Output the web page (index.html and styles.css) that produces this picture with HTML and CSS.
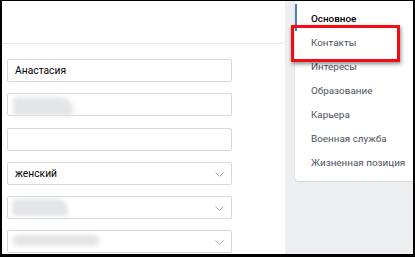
FILE: index.html
```html
<!DOCTYPE html>
<html>
<head>
<meta charset="utf-8">
<link rel="stylesheet" href="styles.css">
</head>
<body>
<div class="frame">
  <div class="main">
    <div class="head"></div>
    <div class="form">
      <div class="field"><span class="val">Анастасия</span></div>
      <div class="field"><span class="blob blob-a"></span></div>
      <div class="field"></div>
      <div class="field select"><span class="val">женский</span><svg class="chev" width="9" height="5" viewBox="0 0 9 5"><path d="M0.5 0.5 L4.5 4.5 L8.5 0.5" fill="none" stroke="#aab4c0" stroke-width="1"/></svg></div>
      <div class="field select"><span class="blob blob-b"></span><svg class="chev" width="9" height="5" viewBox="0 0 9 5"><path d="M0.5 0.5 L4.5 4.5 L8.5 0.5" fill="none" stroke="#aab4c0" stroke-width="1"/></svg></div>
      <div class="field select"><span class="blob blob-c"></span><svg class="chev" width="9" height="5" viewBox="0 0 9 5"><path d="M0.5 0.5 L4.5 4.5 L8.5 0.5" fill="none" stroke="#aab4c0" stroke-width="1"/></svg></div>
    </div>
  </div>
  <div class="side">
    <div class="menu">
      <div class="item active">Основное</div>
      <div class="item">Контакты</div>
      <div class="item">Интересы</div>
      <div class="item">Образование</div>
      <div class="item">Карьера</div>
      <div class="item">Военная служба</div>
      <div class="item">Жизненная позиция</div>
    </div>
  </div>
  <div class="mark"></div>
</div>
</body>
</html>
```
FILE: styles.css
```css
html, body {
  margin: 0;
  padding: 0;
  background: #000;
}
body {
  width: 415px;
  height: 257px;
  overflow: hidden;
  font-family: Roboto, "Open Sans", Arial, sans-serif;
}
.frame {
  position: relative;
  margin: 1px 2px 0 2px;
  width: 411px;
  height: 253px;
  display: flex;
  background: #edeef0;
  overflow: hidden;
}
.main {
  width: 283px;
  flex-shrink: 0;
  background: #fff;
  display: flex;
  flex-direction: column;
}
.head {
  height: 42px;
  border-bottom: 1px solid #e7e8ec;
}
.form {
  padding: 15px 0 0 5px;
  display: flex;
  flex-direction: column;
  gap: 11.3px;
}
.field {
  position: relative;
  width: 216px;
  height: 21px;
  border: 1px solid #d3d9de;
  border-radius: 2px;
  background: #fff;
  display: flex;
  align-items: center;
  padding-left: 7px;
  box-sizing: content-box;
}
.val {
  font-size: 10.3px;
  color: #000;
}
.chev {
  position: absolute;
  right: 7px;
  top: 9px;
}
.blob {
  position: absolute;
  background: #e4e5e7;
  filter: blur(2px);
}
.blob-a {
  left: 5px;
  top: 3px;
  width: 60px;
  height: 19px;
  border-radius: 4px 12px 4px 4px;
}
.blob-b {
  left: 4px;
  top: 2px;
  width: 56px;
  height: 17px;
  border-radius: 5px 10px 4px 5px;
}
.blob-c {
  left: 4px;
  top: 4px;
  width: 88px;
  height: 11px;
  border-radius: 6px;
}
.side {
  margin-left: 10px;
  flex: 1;
  min-width: 0;
}
.menu {
  margin-top: -4px;
  background: #fff;
  border-radius: 0 0 0 4px;
  box-shadow: 0 1px 0 0 #d7d8db, 0 0 0 1px #e3e4e8;
  padding: 10px 0 6px 0;
}
.item {
  height: 24px;
  line-height: 24px;
  padding-left: 16px;
  font-size: 9.9px;
  color: #4a525d;
  white-space: nowrap;
}
.item.active {
  color: #000;
  font-weight: 500;
  border-left: 2px solid #5181b8;
  padding-left: 14px;
  margin-top: -3px;
  height: 27px;
  line-height: 30px;
}
.mark {
  position: absolute;
  left: 289px;
  top: 24px;
  width: 103px;
  height: 31px;
  border: 3px solid #f10d16;
  box-shadow: 1px 2px 4px rgba(0, 0, 0, 0.45);
}
```
